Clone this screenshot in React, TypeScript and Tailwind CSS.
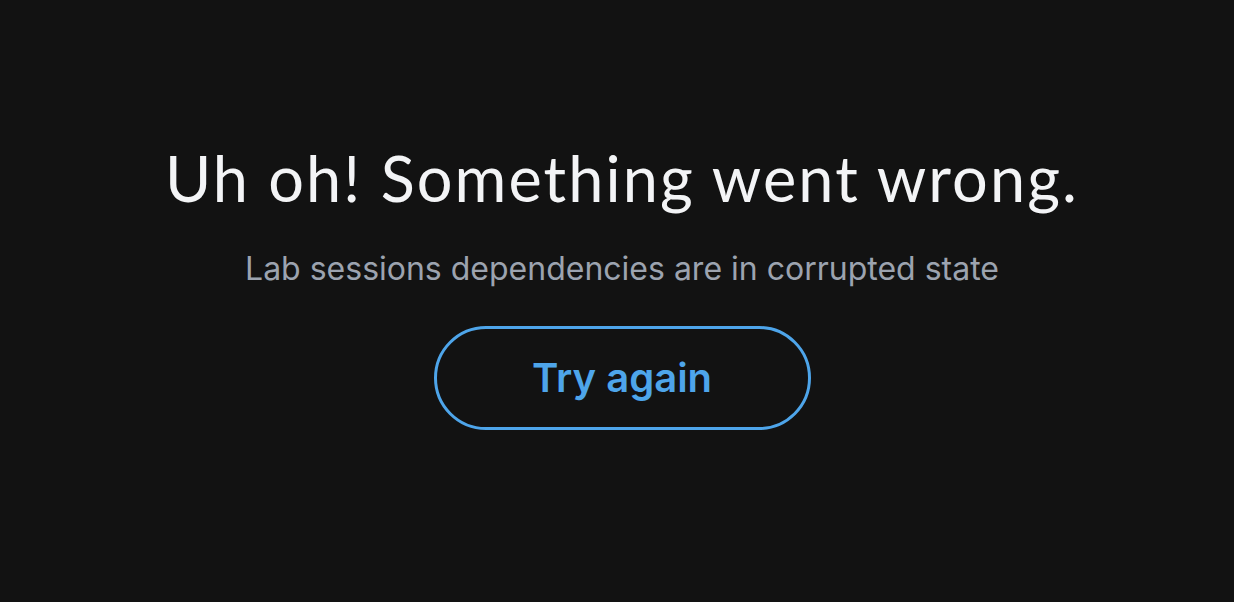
import React from "react";

const App = () => {
    return (
        <div className="w-full h-[602px] bg-[#121212] flex flex-col items-center pt-[138px] pl-[10px]">
            <h1 className="text-[63px] leading-[80px] font-normal text-[#f3f4f6] font-['Lato',sans-serif] tracking-[2.1px]">
                Uh oh! Something went wrong.
            </h1>
            <p className="mt-[31px] text-[32px] leading-[40px] text-[#9ca3af] font-['Inter',sans-serif]">
                Lab sessions dependencies are in corrupted state
            </p>
            <button
                className="mt-[37px] w-[377px] h-[104px] rounded-full border-[3px] border-[#4ea5ea] text-[#4ea5ea] text-[40px] font-semibold font-['Inter',sans-serif] flex items-center justify-center"
                onClick={() => window.location.reload()}
            >
                Try again
            </button>
        </div>
    );
};

export default App;
